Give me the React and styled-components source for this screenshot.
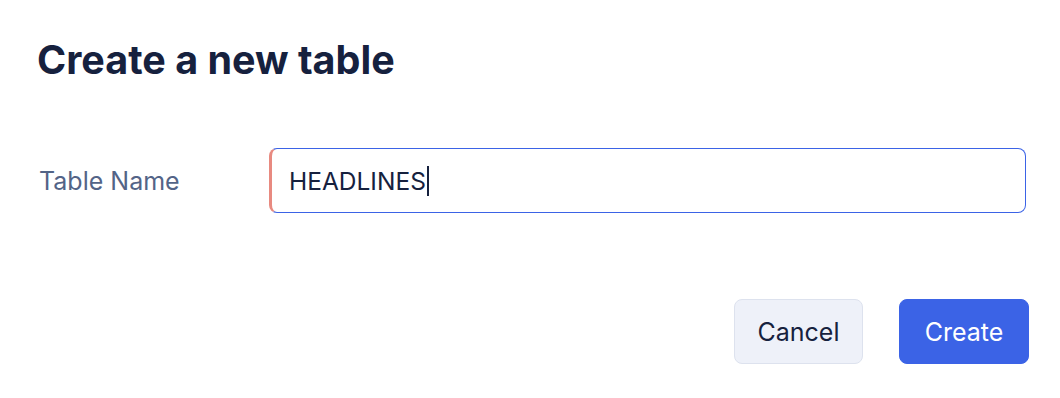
import React from "react";
import styled, { createGlobalStyle } from "styled-components";

const Global = createGlobalStyle`
  html, body { margin: 0; padding: 0; background: #ffffff; }
  body { font-family: Inter, "Noto Sans", sans-serif; -webkit-font-smoothing: antialiased; }
`;

const Dialog = styled.div`
  width: 1060px;
  height: 398px;
  box-sizing: border-box;
  padding: 36px 31px 0 37px;
  display: flex;
  flex-direction: column;
`;

const Title = styled.h1`
  margin: 0;
  font-size: 39.5px;
  font-weight: 700;
  line-height: 48px;
  color: #16213e;
`;

const Field = styled.div`
  display: grid;
  grid-template-columns: 232px 1fr;
  align-items: center;
  margin-top: 64px;
  margin-right: 3px;
`;

const Label = styled.label`
  font-size: 25px;
  color: #536487;
  padding-left: 2px;
`;

const Input = styled.div`
  height: 65px;
  box-sizing: border-box;
  border: 1px solid #3b63e6;
  border-left: 3px solid #e88a80;
  border-radius: 8px;
  display: flex;
  align-items: center;
  padding-left: 17px;
  font-size: 24.5px;
  color: #16213e;
`;

const Caret = styled.span`
  display: inline-block;
  width: 2px;
  height: 30px;
  background: #16213e;
  margin-left: 1px;
`;

const Actions = styled.div`
  display: flex;
  justify-content: flex-end;
  gap: 36px;
  margin-top: 86px;
`;

const Button = styled.button`
  width: ${(p) => (p.$primary ? "130px" : "129px")};
  height: 65px;
  box-sizing: border-box;
  border-radius: 8px;
  font-family: Inter, "Noto Sans", sans-serif;
  font-size: 25px;
  cursor: pointer;
  border: 1px solid ${(p) => (p.$primary ? "#3b63e6" : "#dde2ee")};
  background: ${(p) => (p.$primary ? "#3b63e6" : "#eef1f9")};
  color: ${(p) => (p.$primary ? "#ffffff" : "#16213e")};
`;

export default function App() {
  return (
    <>
      <Global />
      <Dialog>
        <Title>Create a new table</Title>
        <Field>
          <Label>Table Name</Label>
          <Input>
            HEADLINES
            <Caret />
          </Input>
        </Field>
        <Actions>
          <Button>Cancel</Button>
          <Button $primary>Create</Button>
        </Actions>
      </Dialog>
    </>
  );
}
